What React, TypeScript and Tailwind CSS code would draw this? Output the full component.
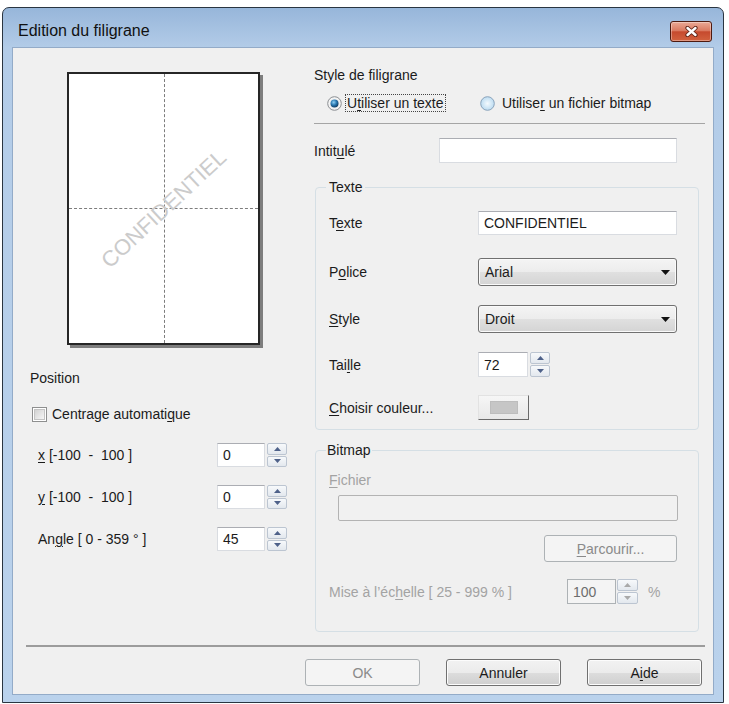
import React from "react";

// access-key underline, like in the Win32 dialog
function U({ children }: { children: React.ReactNode }) {
  return <span className="underline decoration-1 underline-offset-[2px]">{children}</span>;
}

function Spinner({ disabled = false }: { disabled?: boolean }) {
  const fill = disabled ? "#a9a9a9" : "#4e6189";
  return (
    <div className="flex h-full w-full flex-col gap-px">
      <div className="flex flex-1 items-center justify-center rounded-[2px] border border-[#bcc5d1] bg-[linear-gradient(to_bottom,#f7f9fb,#e3e8ee)]">
        <svg width="7" height="4" viewBox="0 0 7 4">
          <path d="M0 4L3.5 0L7 4Z" fill={fill} />
        </svg>
      </div>
      <div className="flex flex-1 items-center justify-center rounded-[2px] border border-[#bcc5d1] bg-[linear-gradient(to_bottom,#f7f9fb,#e3e8ee)]">
        <svg width="7" height="4" viewBox="0 0 7 4">
          <path d="M0 0L7 0L3.5 4Z" fill={fill} />
        </svg>
      </div>
    </div>
  );
}

function TextBox({ value, className }: { value?: string; className: string }) {
  return (
    <div
      className={
        "flex items-center border border-[#d9dce1] border-t-[#abadb3] bg-white pl-[5px] text-[14px] " + className
      }
    >
      {value}
    </div>
  );
}

function Dropdown({ value }: { value: string }) {
  return (
    <div className="flex h-full w-[199px] items-center justify-between rounded-[3px] border border-[#707070] bg-[linear-gradient(to_bottom,#f4f4f4_0%,#ececec_50%,#e0e0e0_50%,#d4d4d4_100%)] pl-[6px] pr-[6px] shadow-[inset_0_0_0_1px_#fafafa]">
      <span>{value}</span>
      <svg width="9" height="5" viewBox="0 0 9 5">
        <path d="M0 0H9L4.5 5Z" fill="#111" />
      </svg>
    </div>
  );
}

function Radio({ checked }: { checked: boolean }) {
  return (
    <svg width="15" height="15" viewBox="0 0 15 15">
      <defs>
        <radialGradient id="rOff" cx="50%" cy="50%" r="50%">
          <stop offset="0%" stopColor="#f4fafe" />
          <stop offset="100%" stopColor="#bcdcf1" />
        </radialGradient>
        <radialGradient id="rDot" cx="40%" cy="35%" r="65%">
          <stop offset="0%" stopColor="#8fd0f5" />
          <stop offset="55%" stopColor="#2a78b0" />
          <stop offset="100%" stopColor="#123f66" />
        </radialGradient>
      </defs>
      {checked ? (
        <>
          <circle cx="7.5" cy="7.5" r="6.8" fill="#f3f3f3" stroke="#8c8f93" strokeWidth="1" />
          <circle cx="7.5" cy="7.5" r="4" fill="url(#rDot)" />
        </>
      ) : (
        <circle cx="7.5" cy="7.5" r="6.8" fill="url(#rOff)" stroke="#8aa3bb" strokeWidth="1" />
      )}
    </svg>
  );
}

function Checkbox() {
  return (
    <div className="flex h-[15px] w-[15px] items-center justify-center border border-[#8e8f8f] bg-white">
      <div className="h-[11px] w-[11px] border border-[#c4c4c4] bg-[linear-gradient(135deg,#d2d2d2,#f6f6f6)]" />
    </div>
  );
}

function SpinRow({ label, value, className }: { label: React.ReactNode; value: string; className: string }) {
  return (
    <div className={"flex h-[24px] items-center " + className}>
      <span className="w-[204px] whitespace-pre pl-[25px]">{label}</span>
      <TextBox value={value} className="h-full w-[48px]" />
      <div className="ml-[2px] h-full w-[20px]">
        <Spinner />
      </div>
    </div>
  );
}

function PushButton({ children, disabled = false }: { children: React.ReactNode; disabled?: boolean }) {
  return disabled ? (
    <div className="flex h-[27px] w-[115px] items-center justify-center rounded-[3px] border border-[#adb2b5] bg-[#f4f4f4] text-[#8a8a8a]">
      {children}
    </div>
  ) : (
    <div className="flex h-[27px] w-[115px] items-center justify-center rounded-[3px] border border-[#707070] bg-[linear-gradient(to_bottom,#f2f2f2_0%,#ebebeb_50%,#dddddd_50%,#cfcfcf_100%)] shadow-[inset_0_0_0_1px_#fcfcfc]">
      {children}
    </div>
  );
}

export default function App() {
  return (
    <div className="h-[704px] w-[729px] bg-white pl-[2px] pt-[7px] font-['Liberation_Sans',Arial,sans-serif] text-[14px] leading-[16px] text-[#1b1b1b]">
      <div className="flex h-[696px] w-[722px] flex-col rounded-t-[7px] border border-[#2a3541] bg-[linear-gradient(to_bottom,#97b6da_0px,#b3cce8_40px,#bad2ec_100%)]">
        {/* title bar */}
        <div className="flex h-[40px] items-center justify-between pl-[15px] pr-[11px] pt-[6px]">
          <span className="text-[16px] text-[#111]">Edition du filigrane</span>
          <div className="flex h-[21px] w-[42px] items-center justify-center rounded-[3px] border border-[#4e1a0f] bg-[linear-gradient(to_bottom,#eaa996_0%,#da7a61_45%,#c64a2e_52%,#d2623f_100%)] shadow-[inset_0_0_0_1px_rgba(255,255,255,0.35)]">
            <svg width="13" height="11" viewBox="0 0 13 11">
              <path d="M2.5 2L10.5 9M10.5 2L2.5 9" stroke="#5b2216" strokeWidth="4.2" strokeLinecap="round" />
              <path d="M2.5 2L10.5 9M10.5 2L2.5 9" stroke="#fff" strokeWidth="2.4" strokeLinecap="round" />
            </svg>
          </div>
        </div>

        {/* client area */}
        <div className="mx-[10px] flex h-[646px] w-[700px] flex-col bg-[#f0f0f0] shadow-[0_0_0_1px_#93abc8]">
          <div className="flex h-[597px]">
            {/* left column */}
            <div className="flex w-[301px] flex-col">
              <div className="relative ml-[54px] mt-[24px] h-[273px] w-[193px] overflow-hidden border-2 border-[#262626] bg-white shadow-[3px_3px_0_#7e7e7e]">
                <div className="absolute left-[95px] top-0 h-full border-l border-dashed border-[#7d7d7d]" />
                <div className="absolute left-0 top-[134px] w-full border-t border-dashed border-[#7d7d7d]" />
                <div className="absolute left-1/2 top-1/2 -translate-x-1/2 -translate-y-1/2 rotate-[-43deg] whitespace-nowrap text-[22px] leading-[22px] text-[#cbcbcb]">
                  CONFIDENTIEL
                </div>
              </div>

              <div className="ml-[17px] mt-[25px]">Position</div>

              <div className="ml-[19px] mt-[20px] flex h-[16px] items-center gap-[5px]">
                <Checkbox />
                <span>
                  Centrage automati<U>q</U>ue
                </span>
              </div>

              <SpinRow
                className="mt-[21px]"
                label={
                  <>
                    <U>x</U> [-100  -  100 ]
                  </>
                }
                value="0"
              />
              <SpinRow
                className="mt-[18px]"
                label={
                  <>
                    <U>y</U> [-100  -  100 ]
                  </>
                }
                value="0"
              />
              <SpinRow
                className="mt-[18px]"
                label={
                  <>
                    An<U>g</U>le [ 0 - 359 ° ]
                  </>
                }
                value="45"
              />
            </div>

            {/* right column */}
            <div className="flex w-[399px] flex-col">
              <div className="mt-[19px]">Style de filigrane</div>

              <div className="mt-[10px] flex h-[20px] items-center">
                <div className="ml-[13px] flex w-[153px] items-center">
                  <Radio checked />
                  <span className="ml-[3px] border border-dotted border-[#444] px-[1px]">
                    U<U>t</U>iliser un texte
                  </span>
                </div>
                <Radio checked={false} />
                <span className="ml-[7px]">
                  Utilise<U>r</U> un fichier bitmap
                </span>
              </div>

              <div className="mt-[10px] h-px w-[391px] bg-[#a5a5a5]" />

              <div className="mt-[14px] flex h-[25px] items-center">
                <span className="w-[125px]">
                  Intit<U>u</U>lé
                </span>
                <TextBox className="h-full w-[238px]" />
              </div>

              {/* Texte group */}
              <div className="relative ml-[1px] mt-[24px] flex h-[243px] w-[384px] flex-col rounded-[4px] border border-[#d5dfe5]">
                <span className="absolute left-[10px] top-[-9px] bg-[#f0f0f0] px-[3px]">Texte</span>

                <div className="mt-[23px] flex h-[24px] items-center pl-[13px]">
                  <span className="w-[149px]">
                    T<U>e</U>xte
                  </span>
                  <TextBox value="CONFIDENTIEL" className="h-full w-[199px]" />
                </div>

                <div className="mt-[23px] flex h-[28px] items-center pl-[13px]">
                  <span className="w-[149px]">
                    P<U>o</U>lice
                  </span>
                  <Dropdown value="Arial" />
                </div>

                <div className="mt-[19px] flex h-[28px] items-center pl-[13px]">
                  <span className="w-[149px]">
                    <U>S</U>tyle
                  </span>
                  <Dropdown value="Droit" />
                </div>

                <div className="mt-[19px] flex h-[25px] items-center pl-[13px]">
                  <span className="w-[149px]">
                    Tai<U>l</U>le
                  </span>
                  <TextBox value="72" className="h-full w-[50px]" />
                  <div className="ml-[2px] h-full w-[20px]">
                    <Spinner />
                  </div>
                </div>

                <div className="mt-[18px] flex h-[25px] items-center pl-[13px]">
                  <span className="w-[149px]">
                    <U>C</U>hoisir couleur...
                  </span>
                  <div className="flex h-full w-[51px] items-center justify-center border border-[#e2e2e2] border-b-[#6a6a6a] border-r-[#6a6a6a] bg-[linear-gradient(to_bottom,#f6f6f6,#e8e8e8)]">
                    <div className="h-[13px] w-[28px] border border-[#bdbdbd] bg-[#c6c6c6]" />
                  </div>
                </div>
              </div>

              {/* Bitmap group */}
              <div className="relative ml-[1px] mt-[20px] flex h-[182px] w-[384px] flex-col rounded-[4px] border border-[#d5dfe5]">
                <span className="absolute left-[10px] top-[-9px] bg-[#f0f0f0] px-[1px]">Bitmap</span>

                <div className="mt-[21px] pl-[13px] text-[#a3a3a3]">
                  <U>F</U>ichier
                </div>

                <div className="ml-[22px] mt-[7px] h-[26px] w-[340px] rounded-[2px] border border-[#b3b3b3] bg-[#f1f1f1]" />

                <div className="ml-[228px] mt-[14px] flex h-[27px] w-[133px] items-center justify-center rounded-[3px] border border-[#adb2b5] bg-[#f4f4f4] text-[#8a8a8a]">
                  <span>
                    <U>P</U>arcourir...
                  </span>
                </div>

                <div className="mt-[17px] flex h-[25px] items-center pl-[13px] text-[#a3a3a3]">
                  <span className="w-[238px]">
                    Mise à l’éc<U>h</U>elle [ 25 - 999 % ]
                  </span>
                  <div className="flex h-full w-[49px] items-center border border-[#adb2b5] bg-[#f4f4f4] pl-[5px] text-[#6d6d6d]">
                    100
                  </div>
                  <div className="ml-[1px] h-full w-[21px]">
                    <Spinner disabled />
                  </div>
                  <span className="ml-[10px]">%</span>
                </div>
              </div>
            </div>
          </div>

          <div className="ml-[13px] h-[2px] w-[679px] bg-[#9c9c9c]" />

          <div className="mt-[12px] flex justify-end gap-[26px] pr-[11px]">
            <PushButton disabled>OK</PushButton>
            <PushButton>Annuler</PushButton>
            <PushButton>
              A<U>i</U>de
            </PushButton>
          </div>
        </div>
      </div>
    </div>
  );
}
